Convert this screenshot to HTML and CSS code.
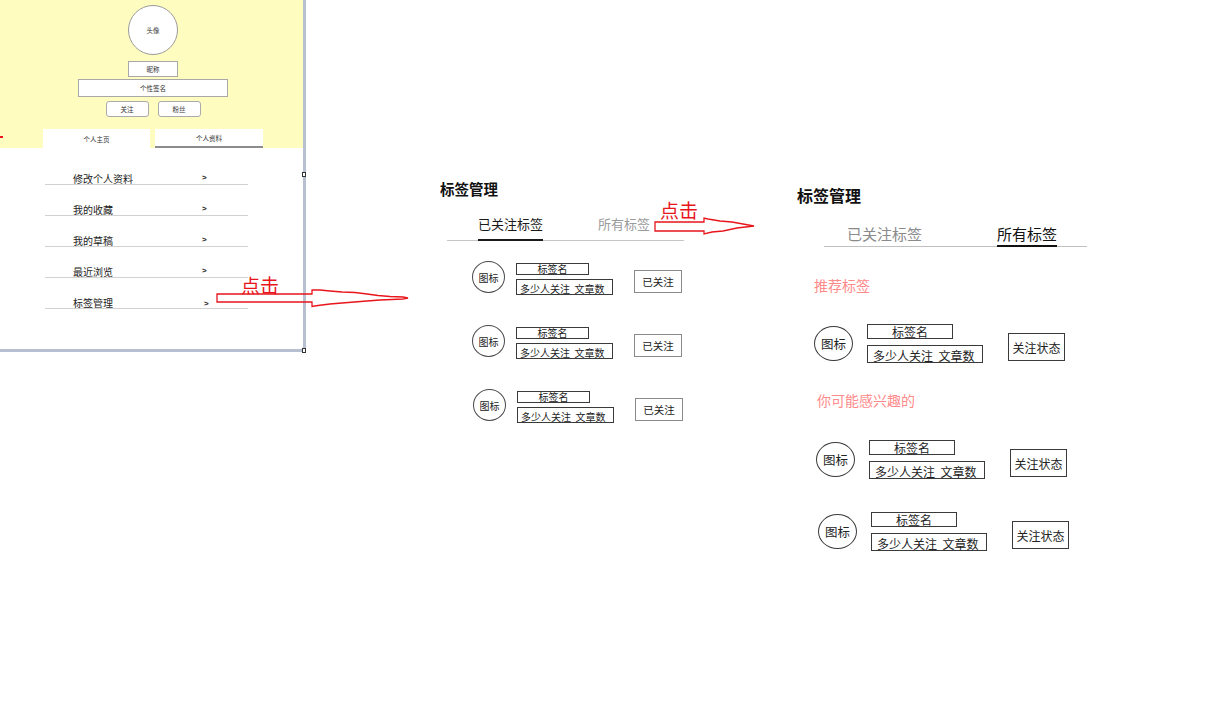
FILE: index.html
```html
<!DOCTYPE html>
<html lang="zh-CN">
<head>
<meta charset="utf-8">
<title>标签管理 原型</title>
<link rel="stylesheet" href="styles.css">
</head>
<body>
<div class="canvas">

  <section class="frame profile">
    <header class="profile-head">
      <div class="avatar">头像</div>
      <div class="nick">昵称</div>
      <div class="sign">个性签名</div>
      <div class="follow-row">
        <span class="pill">关注</span>
        <span class="pill">粉丝</span>
      </div>
      <div class="ptabs">
        <span class="ptab">个人主页</span>
        <span class="ptab ptab-line">个人资料</span>
      </div>
    </header>
    <ul class="menu">
      <li class="menu-item"><span class="menu-label">修改个人资料</span><span class="chev">&gt;</span></li>
      <li class="menu-item"><span class="menu-label">我的收藏</span><span class="chev">&gt;</span></li>
      <li class="menu-item"><span class="menu-label">我的草稿</span><span class="chev">&gt;</span></li>
      <li class="menu-item"><span class="menu-label">最近浏览</span><span class="chev">&gt;</span></li>
      <li class="menu-item"><span class="menu-label">标签管理</span><span class="chev chev-low">&gt;</span></li>
    </ul>
    <span class="handle handle-mid"></span>
    <span class="handle handle-bottom"></span>
    <span class="edge-mark"></span>
  </section>

  <section class="frame tm">
    <h2 class="tm-title">标签管理</h2>
    <nav class="tm-tabs">
      <span class="tm-tab on">已关注标签</span>
      <span class="tm-tab">所有标签</span>
    </nav>
    <div class="tm-list">
      <div class="tm-row">
        <div class="tm-icon">图标</div>
        <div class="tm-info">
          <div class="tm-name">标签名</div>
          <div class="tm-count">多少人关注&nbsp; 文章数</div>
        </div>
        <div class="tm-status">已关注</div>
      </div>
      <div class="tm-row">
        <div class="tm-icon">图标</div>
        <div class="tm-info">
          <div class="tm-name">标签名</div>
          <div class="tm-count">多少人关注&nbsp; 文章数</div>
        </div>
        <div class="tm-status">已关注</div>
      </div>
      <div class="tm-row tm-row-shift">
        <div class="tm-icon">图标</div>
        <div class="tm-info">
          <div class="tm-name">标签名</div>
          <div class="tm-count">多少人关注&nbsp; 文章数</div>
        </div>
        <div class="tm-status">已关注</div>
      </div>
    </div>
  </section>

  <section class="frame ta">
    <h2 class="ta-title">标签管理</h2>
    <nav class="ta-tabs">
      <span class="ta-tab">已关注标签</span>
      <span class="ta-tab on">所有标签</span>
    </nav>
    <h3 class="ta-sec">推荐标签</h3>
    <div class="ta-row ta-row-1">
      <div class="ta-icon">图标</div>
      <div class="ta-info">
        <div class="ta-name">标签名</div>
        <div class="ta-count">多少人关注&nbsp; 文章数</div>
      </div>
      <div class="ta-status">关注状态</div>
    </div>
    <h3 class="ta-sec ta-sec-2">你可能感兴趣的</h3>
    <div class="ta-row ta-row-2">
      <div class="ta-icon">图标</div>
      <div class="ta-info">
        <div class="ta-name">标签名</div>
        <div class="ta-count">多少人关注&nbsp; 文章数</div>
      </div>
      <div class="ta-status">关注状态</div>
    </div>
    <div class="ta-row ta-row-3">
      <div class="ta-icon">图标</div>
      <div class="ta-info">
        <div class="ta-name">标签名</div>
        <div class="ta-count">多少人关注&nbsp; 文章数</div>
      </div>
      <div class="ta-status">关注状态</div>
    </div>
  </section>

  <span class="note note-1">点击</span>
  <svg class="arrow arrow-1" viewBox="215 286 196 24" width="196" height="24">
    <polygon points="217,294 312,294 312,290 320,290 330,291 342,292 355,292.5 367,294 378,295.5 390,296.5 403,297 408,298 403,299 392,299.5 380,300 367,301 342,303 330,304 318,305.5 312,306.5 312,302 217,302" />
  </svg>

  <span class="note note-2">点击</span>
  <svg class="arrow arrow-2" viewBox="653 216 104 20" width="104" height="20">
    <polygon points="655,222 704,222 704,218 708,219 720,221 732,222 754,226 737,228 723,231 712,232 704,234 704,231 655,231" />
  </svg>

</div>
</body>
</html>
```

FILE: styles.css
```css
* {
  box-sizing: border-box;
  margin: 0;
  padding: 0;
}

html,
body {
  width: 1214px;
  height: 719px;
  background: #ffffff;
  overflow: hidden;
}

body {
  font-family: "Noto Sans CJK SC", "Noto Sans", sans-serif;
  color: #222222;
}

.canvas {
  position: relative;
  width: 1214px;
  height: 719px;
}

.frame {
  position: absolute;
}

/* ---------- left: profile frame ---------- */
.profile {
  left: 0;
  top: 0;
  width: 306px;
  height: 352px;
  border-right: 3px solid #b6c0d0;
  border-bottom: 3px solid #b6c0d0;
  background: #ffffff;
}

.profile-head {
  height: 148px;
  background: #fffcc0;
  display: flex;
  flex-direction: column;
  align-items: center;
  padding: 5px 0 0 3px;
  font-size: 6.5px;
  color: #333333;
}

.avatar {
  width: 50px;
  height: 50px;
  border: 1px solid #9a9a9a;
  border-radius: 50%;
  background: #ffffff;
  display: flex;
  align-items: center;
  justify-content: center;
}

.nick,
.sign,
.pill,
.ptab {
  display: flex;
  align-items: center;
  justify-content: center;
  background: #ffffff;
}

.nick {
  margin-top: 6px;
  width: 50px;
  height: 16px;
  border: 1px solid #a8a8a8;
}

.sign {
  margin-top: 2px;
  width: 150px;
  height: 18px;
  border: 1px solid #a8a8a8;
}

.follow-row {
  margin-top: 4px;
  display: flex;
  gap: 9px;
}

.pill {
  width: 43px;
  height: 16px;
  border: 1px solid #ababab;
  border-radius: 3px;
}

.ptabs {
  margin-top: 12px;
  display: flex;
  gap: 5px;
}

.ptab {
  width: 107px;
  height: 19px;
}

.ptab-line {
  width: 108px;
  border-bottom: 2px solid #8c8c8c;
}

.menu {
  list-style: none;
  margin-left: 45px;
  padding-top: 6px;
  width: 203px;
}

.menu-item {
  height: 31px;
  display: flex;
  align-items: flex-end;
  padding: 0 41px 0 28px;
  border-bottom: 1px solid #d2d2d2;
  font-size: 10px;
  line-height: 10px;
  color: #222222;
}

.menu-label {
  flex: 1;
}

.chev {
  width: 5px;
  font-size: 8px;
  line-height: 12px;
  font-weight: 700;
  font-family: "Liberation Sans", sans-serif;
}

.chev-low {
  transform: translate(2px, 2px);
}

.handle {
  position: absolute;
  width: 4px;
  height: 5px;
  border: 1px solid #333333;
  background: #ffffff;
}

.handle-mid {
  left: 302px;
  top: 172px;
}

.handle-bottom {
  left: 302px;
  top: 348px;
}

.edge-mark {
  position: absolute;
  left: 0;
  top: 136px;
  width: 3px;
  height: 2px;
  background: #e8151b;
}

/* ---------- middle: followed tags ---------- */
.tm {
  left: 440px;
  top: 180px;
  width: 250px;
}

.tm-title {
  font-size: 14.5px;
  font-weight: 700;
  line-height: 18px;
  color: #111111;
}

.tm-tabs {
  margin: 18px 0 0 7px;
  width: 237px;
  display: flex;
  gap: 55px;
  padding-left: 31px;
  border-bottom: 1px solid #c6c6c6;
}

.tm-tab {
  font-size: 13px;
  line-height: 16px;
  padding-bottom: 7px;
  color: #9a9a9a;
}

.tm-tab.on {
  color: #1a1a1a;
  border-bottom: 2px solid #1a1a1a;
  margin-bottom: -1px;
}

.tm-list {
  margin: 20px 0 0 32px;
  display: flex;
  flex-direction: column;
  gap: 30px;
}

.tm-row {
  display: flex;
  align-items: flex-start;
}

.tm-row-shift {
  margin-left: 1px;
}

.tm-icon {
  width: 33px;
  height: 32px;
  border: 1px solid #4a4a4a;
  border-radius: 50%;
  display: flex;
  align-items: center;
  justify-content: center;
  font-size: 10px;
}

.tm-info {
  margin: 2px 0 0 11px;
  display: flex;
  flex-direction: column;
  gap: 4px;
}

.tm-name {
  width: 73px;
  height: 12px;
  border: 1px solid #3a3a3a;
  font-size: 10px;
  line-height: 10px;
  text-align: center;
}

.tm-count {
  width: 97px;
  height: 16px;
  border: 1px solid #3a3a3a;
  font-size: 10px;
  line-height: 12px;
  padding: 3px 0 0 3px;
  overflow: hidden;
  white-space: nowrap;
}

.tm-status {
  margin: 9px 0 0 21px;
  width: 48px;
  height: 23px;
  border: 1px solid #8a8a8a;
  display: flex;
  align-items: center;
  justify-content: center;
  font-size: 10.5px;
}

/* ---------- right: all tags ---------- */
.ta {
  left: 797px;
  top: 185px;
  width: 300px;
}

.ta-title {
  font-size: 16px;
  font-weight: 700;
  line-height: 20px;
  color: #111111;
}

.ta-tabs {
  margin: 20px 0 0 27px;
  width: 263px;
  display: flex;
  gap: 75px;
  padding-left: 23px;
  border-bottom: 1px solid #c0c0c0;
}

.ta-tab {
  font-size: 15px;
  line-height: 18px;
  padding-bottom: 2px;
  color: #8a8a8a;
}

.ta-tab.on {
  color: #111111;
  border-bottom: 2px solid #111111;
  margin-bottom: -1px;
}

.ta-sec {
  margin: 29px 0 0 17px;
  font-size: 14px;
  font-weight: 400;
  line-height: 18px;
  color: #ff8a8a;
}

.ta-sec-2 {
  margin: 28px 0 0 20px;
}

.ta-row {
  display: flex;
  align-items: center;
}

.ta-row-1 {
  margin: 30px 0 0 17px;
}

.ta-row-2 {
  margin: 31px 0 0 19px;
}

.ta-row-3 {
  margin: 33px 0 0 21px;
}

.ta-icon {
  width: 39px;
  height: 35px;
  border: 1px solid #3a3a3a;
  border-radius: 50%;
  display: flex;
  align-items: center;
  justify-content: center;
  font-size: 12.5px;
}

.ta-info {
  margin-left: 14px;
  display: flex;
  flex-direction: column;
  gap: 6px;
}

.ta-name {
  width: 86px;
  height: 15px;
  border: 1px solid #3a3a3a;
  font-size: 12px;
  line-height: 13px;
  text-align: center;
}

.ta-count {
  width: 116px;
  height: 18px;
  border: 1px solid #3a3a3a;
  font-size: 12px;
  line-height: 14px;
  padding: 3px 0 0 5px;
  overflow: hidden;
  white-space: nowrap;
}

.ta-status {
  margin: 7px 0 0 25px;
  width: 57px;
  height: 28px;
  border: 1px solid #3a3a3a;
  display: flex;
  align-items: center;
  justify-content: center;
  font-size: 12px;
}

/* ---------- annotations ---------- */
.note {
  position: absolute;
  font-size: 19px;
  line-height: 20px;
  color: #e8151b;
}

.note-1 {
  left: 241px;
  top: 275px;
}

.note-2 {
  left: 660px;
  top: 200px;
}

.arrow {
  position: absolute;
  overflow: visible;
}

.arrow polygon {
  fill: none;
  stroke: #e8151b;
  stroke-width: 1.3;
}

.arrow-1 {
  left: 215px;
  top: 286px;
}

.arrow-2 {
  left: 653px;
  top: 216px;
}
```
